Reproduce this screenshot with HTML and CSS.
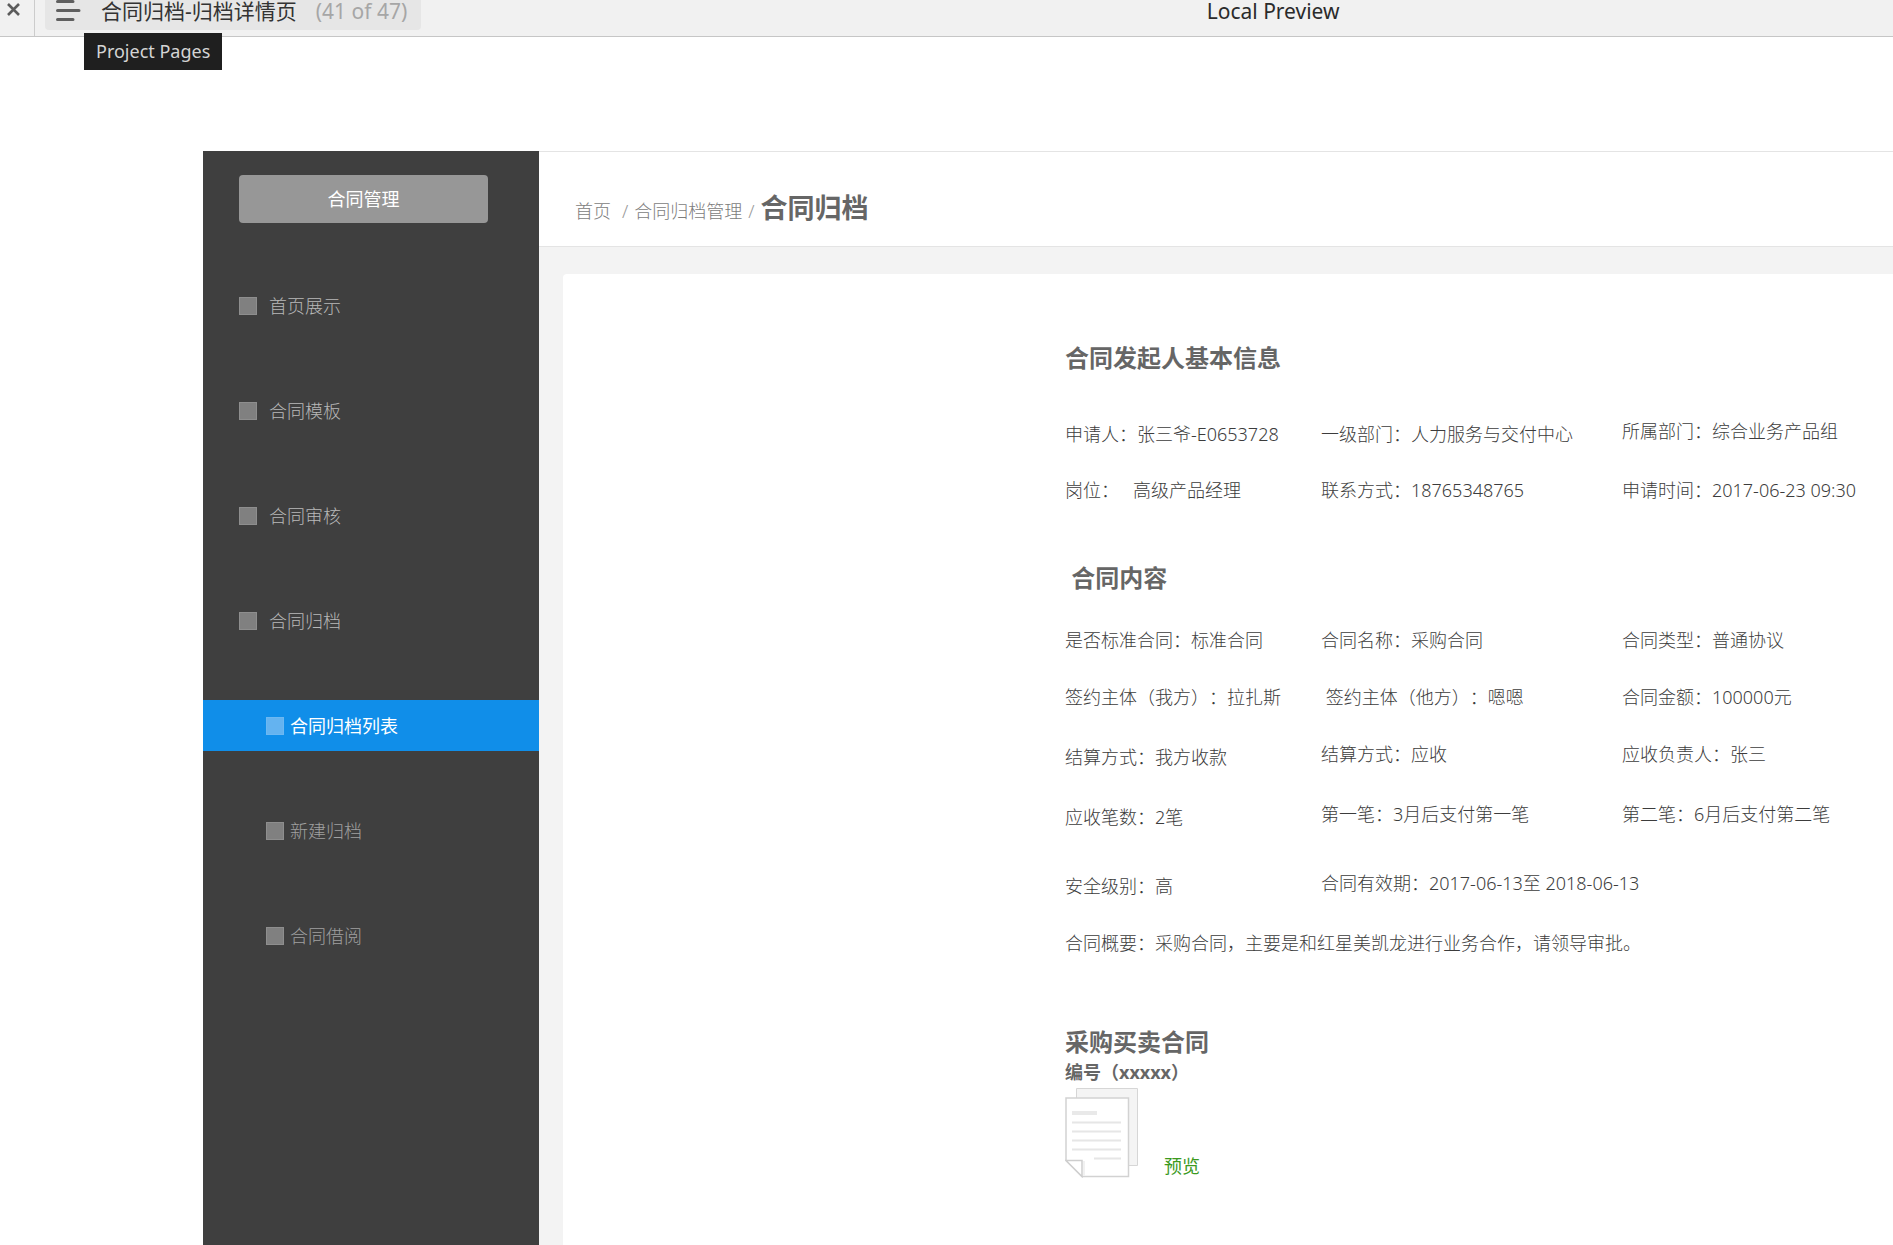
FILE: index.html
```html
<!DOCTYPE html>
<html lang="zh-CN">
<head>
<meta charset="utf-8">
<title>合同归档-归档详情页</title>
<link rel="stylesheet" href="styles.css">
</head>
<body>
<header class="toolbar">
  <button class="close" type="button" aria-label="Close">
    <svg width="15" height="15" viewBox="0 0 15 15"><path d="M2 2L13 13M13 2L2 13" stroke="#5c5c5c" stroke-width="2.6" fill="none"/></svg>
  </button>
  <button class="pages" type="button">
    <svg width="26" height="24" viewBox="0 0 26 24"><path d="M2.500 3.500H18M2.500 12.500H24M2.500 21.500H18" stroke="#5f5f5f" stroke-width="3" stroke-linecap="round" fill="none"/></svg>
    <span class="page-name">合同归档-归档详情页</span>
    <span class="page-count">(41 of 47)</span>
  </button>
  <span class="tooltip" role="tooltip">Project Pages</span>
  <div class="preview-title">Local Preview</div>
</header>

<div class="app">
  <aside class="sidebar">
    <button class="module" type="button">合同管理</button>
    <nav class="menu">
      <a href="#" class="item"><i class="box"></i>首页展示</a>
      <a href="#" class="item"><i class="box"></i>合同模板</a>
      <a href="#" class="item"><i class="box"></i>合同审核</a>
      <a href="#" class="item"><i class="box"></i>合同归档</a>
      <a href="#" class="item sub active"><i class="box"></i>合同归档列表</a>
      <a href="#" class="item sub"><i class="box"></i>新建归档</a>
      <a href="#" class="item sub"><i class="box"></i>合同借阅</a>
    </nav>
  </aside>

  <main class="main">
    <div class="crumbs">
      <a href="#" class="home">首页</a><span class="slash">/</span><a href="#">合同归档管理</a><span class="slash">/</span><h1>合同归档</h1>
    </div>
    <div class="body">
      <article class="card">
        <section class="applicant">
          <h2>合同发起人基本信息</h2>
          <div class="fields">
            <p class="low">申请人：张三爷-E0653728</p>
            <p class="low">一级部门：人力服务与交付中心</p>
            <p>所属部门：综合业务产品组</p>
            <p>岗位：&nbsp;&nbsp;&nbsp;高级产品经理</p>
            <p>联系方式：18765348765</p>
            <p>申请时间：2017-06-23 09:30</p>
          </div>
        </section>

        <section class="contract">
          <h2>&nbsp;合同内容</h2>
          <div class="fields">
            <p>是否标准合同：标准合同</p>
            <p>合同名称：采购合同</p>
            <p>合同类型：普通协议</p>
            <p>签约主体（我方）：拉扎斯</p>
            <p>&nbsp;签约主体（他方）：嗯嗯</p>
            <p>合同金额：100000元</p>
            <p class="low">结算方式：我方收款</p>
            <p>结算方式：应收</p>
            <p>应收负责人：张三</p>
            <p class="low">应收笔数：2笔</p>
            <p>第一笔：3月后支付第一笔</p>
            <p>第二笔：6月后支付第二笔</p>
            <p class="low">安全级别：高</p>
            <p class="wide">合同有效期：2017-06-13至 2018-06-13</p>
            <p class="full">合同概要：采购合同，主要是和红星美凯龙进行业务合作，请领导审批。</p>
          </div>
        </section>

        <section class="document">
          <h2>采购买卖合同</h2>
          <h3>编号（xxxxx）</h3>
          <div class="file">
            <svg width="75" height="90" viewBox="0 0 75 90">
              <path d="M11.500 .5H72.500V77.500H11.500Z" fill="#f4f4f4" stroke="#d6d6d6"/>
              <path d="M1 10H63.500V88.500H17L1 72.500Z" fill="#fff" stroke="#d2d2d2" stroke-width="1.500"/>
              <path d="M1 72.500H17V88.500Z" fill="#fff" stroke="#cecece" stroke-width="1.500"/>
              <path d="M18 73H20V88H18Z" fill="#f1f1f1"/>
              <path d="M7 25H32" stroke="#e9e9e9" stroke-width="4"/>
              <path d="M7 34.500H56M7 43.500H56M7 52.500H56M7 61.500H56M29 70.500H56" stroke="#e6e6e6" stroke-width="2"/>
            </svg>
            <a href="#" class="view">预览</a>
          </div>
        </section>
      </article>
    </div>
  </main>
</div>
</body>
</html>
```
FILE: styles.css
```css
* { box-sizing: border-box; }

body {
  margin: 0;
  min-height: 100vh;
  display: flex;
  flex-direction: column;
  background: #fff;
  color: #3c3c3c;
  font: 300 18px/24px "Noto Sans", "Noto Sans CJK SC", sans-serif;
  text-spacing-trim: space-all;
  overflow-x: hidden;
}

h1, h2, h3, p { margin: 0; }
h1, h2, h3 { color: #666; }
a { color: inherit; text-decoration: none; }
button { border: 0; padding: 0; font: inherit; cursor: pointer; }
svg { display: block; flex: none; }

/* Preview toolbar */
.toolbar {
  position: relative;
  display: flex;
  align-items: flex-start;
  height: 37px;
  background: #f1f1f1;
  border-bottom: 1px solid #c6c6c6;
  font-weight: 400;
}
.close {
  width: 35px;
  height: 36px;
  padding: 2px 0 0 6px;
  display: flex;
  background: none;
  border-right: 1px solid #ccc;
}
.pages {
  display: flex;
  align-items: flex-start;
  height: 30px;
  margin-left: 10px;
  padding: 0 14px 0 10px;
  background: #e6e6e6;
  border-radius: 0 0 4px 4px;
  font-size: 21px;
  line-height: 22px;
}
.pages svg { margin-top: -2px; }
.page-name { margin-left: 20px; color: #333; }
.page-count { margin-left: 19px; color: #a6a6a6; }
.preview-title {
  flex: 1;
  padding-left: 232px;
  text-align: center;
  font-size: 21px;
  line-height: 22px;
  color: #2b2b2b;
}
.tooltip {
  position: absolute;
  left: 84px;
  top: 33px;
  padding: 6px 12px 7px;
  background: #1f1f1f;
  color: #d4d4d4;
}

/* Application */
.app {
  flex: 1;
  display: flex;
  margin: 114px 0 0 203px;
}
.sidebar {
  flex: none;
  width: 336px;
  background: #3f3f3f;
}
.module {
  display: block;
  width: 249px;
  height: 48px;
  margin: 24px 0 0 36px;
  background: #979797;
  border-radius: 4px;
  color: #fff;
  font-weight: 400;
}
.menu {
  display: flex;
  flex-direction: column;
  gap: 54px;
  margin-top: 57px;
}
.item {
  display: flex;
  align-items: center;
  gap: 12px;
  height: 51px;
  padding-left: 36px;
  color: #b8b8b8;
}
.box {
  width: 18px;
  height: 18px;
  background: #808080;
  border: 1px solid #8e8e8e;
}
.sub {
  gap: 6px;
  padding-left: 63px;
  color: #a0a0a0;
}
.active { background: #108ee9; color: #fff; font-weight: 400; }
.active .box { background: #64b3f0; border-color: #6cb8f2; }

.main {
  flex: 1;
  min-width: 0;
  display: flex;
  flex-direction: column;
}
.crumbs {
  display: flex;
  align-items: baseline;
  height: 96px;
  padding: 38px 0 0 36px;
  border-top: 1px solid #e4e4e4;
  border-bottom: 1px solid #e4e4e4;
  color: #7c7c7c;
}
.crumbs h1 {
  font-size: 27px;
  line-height: 36px;
}
.home { margin-right: 5px; }
.slash { margin: 0 6px; color: #999; }
.body {
  flex: 1;
  display: flex;
  padding: 27px 0 0 24px;
  background: #f3f3f3;
}
.card {
  flex: 1;
  padding: 68px 0 60px 502px;
  background: #fff;
  border-radius: 4px 0 0 0;
}

.card h2 { font-size: 24px; line-height: 32px; }
.card h3 { font-size: 18px; line-height: 24px; }
.fields {
  display: grid;
  grid-template-columns: 256px 301px 1fr;
  white-space: nowrap;
}
.low { align-self: end; }
.wide { grid-column: 2 / -1; margin-top: 9px; }
.full { grid-column: 1 / -1; }

.applicant .fields {
  margin-top: 45px;
  grid-template-rows: 27px 24px;
  row-gap: 32px;
}
.contract { margin-top: 60px; }
.contract .fields {
  margin-top: 34px;
  grid-template-rows: 24px 24px 27px 27px 36px 24px;
  row-gap: 33px;
}
.document { margin-top: 71px; }
.document h3 { margin-top: 2px; }
.file {
  display: flex;
  align-items: flex-end;
  gap: 24px;
  margin-top: 4px;
}
.view { color: #3c9a1e; font-weight: 400; }
```
